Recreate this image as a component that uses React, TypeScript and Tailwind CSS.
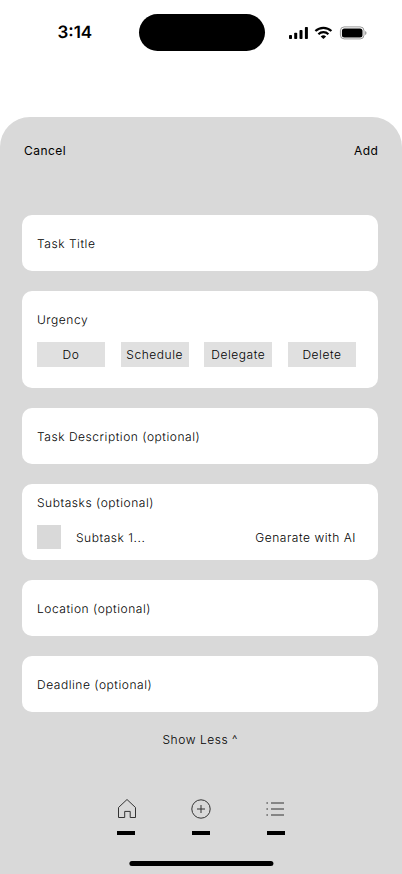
import type { ReactNode } from "react";

function StatusBar() {
  return (
    <header className="flex h-[117px] items-start bg-white pt-[14px]">
      <div className="flex h-[38px] w-[138.5px] items-center pl-[57.4px] text-[17px] font-semibold leading-[22px] text-black">
        3:14
      </div>
      <div className="h-[36.5px] w-[126px] rounded-full bg-black" />
      <div className="flex h-[37px] items-center pl-6">
        <svg width="80" height="14" viewBox="0 0 80 14" fill="none">
          <g fill="#000">
            <rect x="0" y="9" width="3" height="4" rx="0.8" />
            <rect x="5.2" y="6.7" width="3" height="6.3" rx="0.8" />
            <rect x="10.5" y="4.1" width="3" height="8.9" rx="0.8" />
            <rect x="15.9" y="1" width="3" height="12" rx="0.8" />
          </g>
          <g stroke="#000" strokeWidth="2.2">
            <path d="M26.4 5a11.6 11.6 0 0 1 16 0" />
            <path d="M29.4 8.2a7.2 7.2 0 0 1 10 0" />
          </g>
          <path d="M34.4 13.1 31.7 10.5a3.9 3.9 0 0 1 5.4 0z" fill="#000" />
          <rect x="51.4" y="0.9" width="23.6" height="12" rx="3.8" stroke="#000" strokeOpacity="0.4" />
          <rect x="52.9" y="2.4" width="20.6" height="9" rx="2.5" fill="#000" />
          <path d="M76.2 4.9v4a2.2 2.2 0 0 0 0-4" fill="#000" fillOpacity="0.45" />
        </svg>
      </div>
    </header>
  );
}

function Card({ className, children }: { className: string; children: ReactNode }) {
  return <section className={`flex flex-col rounded-[10px] bg-white pl-[15px] pr-[22px] ${className}`}>{children}</section>;
}

function Field({ label }: { label: string }) {
  return <Card className="h-14 justify-center">{label}</Card>;
}

const urgencies = ["Do", "Schedule", "Delegate", "Delete"];

function TabIcon({ children }: { children: ReactNode }) {
  return (
    <svg width="20" height="20" viewBox="0 0 20 20" fill="none" stroke="#333" strokeWidth="1" strokeLinejoin="round">
      {children}
    </svg>
  );
}

function Tab({ children }: { children: ReactNode }) {
  return (
    <button className="flex w-[18px] flex-col items-center">
      <span className="flex h-5 w-5 shrink-0">{children}</span>
      <span className="mt-3 h-1 w-[18px] bg-black" />
    </button>
  );
}

export default function App() {
  return (
    <div className="flex h-[874px] w-[402px] flex-col overflow-hidden bg-white font-['Inter',sans-serif] antialiased [text-rendering:geometricPrecision]">
      <StatusBar />
      <main className="flex h-[757px] flex-col rounded-t-[30px] bg-[#d9d9d9] text-[12px] font-light leading-[15px] tracking-[0.54px] text-black">
        <div className="flex h-[98px] justify-between pl-6 pr-[23.6px] pt-[26px] font-normal tracking-[0.45px]">
          <button className="h-[15px]">Cancel</button>
          <button className="h-[15px]">Add</button>
        </div>
        <div className="flex flex-col gap-5 px-[22px] pr-6">
          <Field label="Task Title" />
          <Card className="h-[97px] pt-[21px]">
            <span>Urgency</span>
            <div className="mt-[15px] flex justify-between">
              {urgencies.map((name) => (
                <button key={name} className="flex h-[25px] w-[68px] items-center justify-center bg-[#e0e0e0]">
                  {name}
                </button>
              ))}
            </div>
          </Card>
          <Field label="Task Description (optional)" />
          <Card className="h-[76px] pt-[11px]">
            <span>Subtasks (optional)</span>
            <div className="mt-[15px] flex items-center">
              <span className="h-6 w-6 bg-[#d9d9d9]" />
              <span className="ml-[15px]">Subtask 1...</span>
              <button className="ml-auto">Genarate with AI</button>
            </div>
          </Card>
          <Field label="Location (optional)" />
          <Field label="Deadline (optional)" />
        </div>
        <button className="mt-5 h-[15px] pr-[1.5px]">Show Less ^</button>
        <nav className="mt-[52px] flex justify-between pl-[117px] pr-[117px]">
          <Tab>
            <TabIcon>
              <path d="M2.5 8.5 11 .5l8.5 8v10h-5.3v-6.1H8.7v6.1H2.5z" />
            </TabIcon>
          </Tab>
          <Tab>
            <TabIcon>
              <circle cx="10" cy="10" r="9.2" />
              <path d="M10 6v8M6 10h8" />
            </TabIcon>
          </Tab>
          <Tab>
            <TabIcon>
              <path d="M0.4 4h1.6M5 4h13M0.4 10h1.6M5 10h13M0.4 16h1.6M5 16h13" />
            </TabIcon>
          </Tab>
        </nav>
        <div className="mt-[26px] h-[5px] w-36 translate-x-[0.4px] self-center rounded-full bg-black" />
      </main>
    </div>
  );
}
